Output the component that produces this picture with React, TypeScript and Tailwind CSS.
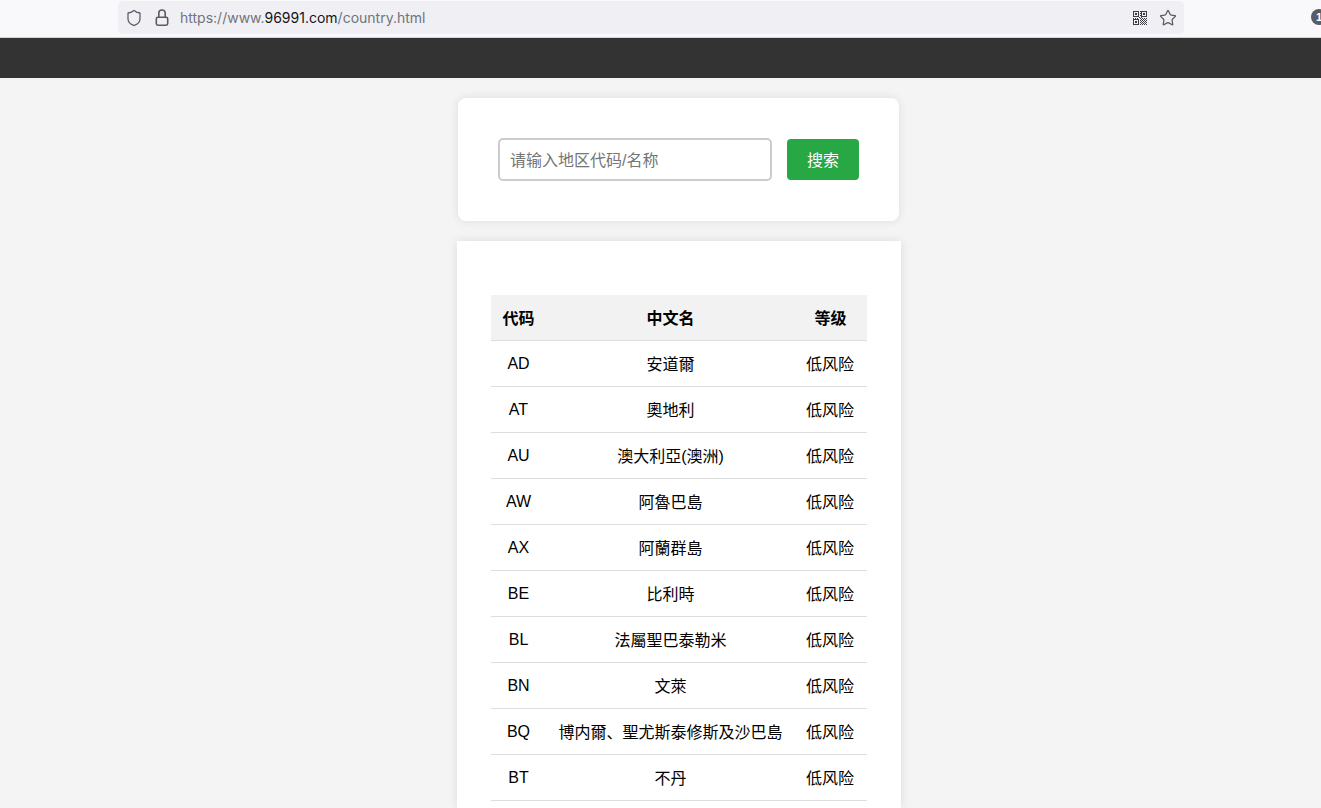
import React from 'react';
import { Shield, Star } from 'lucide-react';

const rows = [
  ['AD', '安道爾'],
  ['AT', '奧地利'],
  ['AU', '澳大利亞(澳洲)'],
  ['AW', '阿魯巴島'],
  ['AX', '阿蘭群島'],
  ['BE', '比利時'],
  ['BL', '法屬聖巴泰勒米'],
  ['BN', '文萊'],
  ['BQ', '博内爾、聖尤斯泰修斯及沙巴島'],
  ['BT', '不丹'],
];

// QR code button in the address bar
const QrIcon = () => (
  <svg width="14" height="14" viewBox="0 0 14 14" fill="#3c3c44" shapeRendering="crispEdges">
    <path d="M0 0h6v6H0zM1 1v4h4V1zM2 2h2v2H2zM8 0h6v6H8zM9 1v4h4V1zM10 2h2v2h-2zM0 8h6v6H0zM1 9v4h4V9zM2 10h2v2H2z" fillRule="evenodd" />
    <path d="M7 0h1v1H7zM7 2h1v1H7zM7 4h1v1H7zM0 7h1v1H0zM2 7h1v1H2zM4 7h1v1H4zM6 6h1v1H6zM7 7h1v1H7zM8 6h1v1H8zM9 7h1v1H9zM11 7h1v1h-1zM13 7h1v1h-1zM8 8h1v1H8zM10 8h1v1h-1zM12 8h1v1h-1zM7 9h1v1H7zM9 9h1v1H9zM11 9h1v1h-1zM13 9h1v1h-1zM8 10h1v1H8zM10 10h1v1h-1zM12 10h1v1h-1zM7 11h1v1H7zM9 11h1v1H9zM11 11h1v1h-1zM13 11h1v1h-1zM8 12h1v1H8zM10 12h1v1h-1zM12 12h1v1h-1zM7 13h1v1H7zM9 13h1v1H9zM11 13h1v1h-1zM13 13h1v1h-1z" />
  </svg>
);

// Narrow padlock, taller shackle than lucide's
const LockIcon = () => (
  <svg width="14" height="17" viewBox="0 0 14 17" fill="none" stroke="currentColor" strokeWidth="1.6" className="ml-[12px]">
    <rect x="1.3" y="8.3" width="11.4" height="7.9" rx="1.6" />
    <path d="M3.8 8.3V4.2a3.2 3.2 0 0 1 6.4 0v4.1" />
  </svg>
);

const App: React.FC = () => {
  return (
    <div className="flex flex-col h-screen overflow-hidden bg-[#f4f4f4] text-black font-['Liberation_Sans','Noto_Sans_CJK_SC',sans-serif]">
      {/* Browser toolbar */}
      <div className="flex h-[38px] shrink-0 items-start overflow-hidden border-b border-[#d4d4d6] bg-[#f9f9fb] pl-[118px] pt-px">
        <div className="flex h-[33px] w-[1066px] shrink-0 items-center rounded-[5px] bg-[#f0f0f4] pl-[7px] pr-[7px] text-[#5b5b66]">
          <Shield size={18} strokeWidth={1.7} />
          <LockIcon />
          <span className="ml-[11px] text-[14px] text-[#73737b] font-['Inter','Liberation_Sans',sans-serif]">
            https://www.<span className="text-[#15141a]">96991.com</span>/country.html
          </span>
          <div className="ml-auto flex items-center gap-[12px]">
            <QrIcon />
            <Star size={18} strokeWidth={1.7} />
          </div>
        </div>
        <div className="ml-[127px] mt-[8px] h-4 w-4 shrink-0 rounded-full bg-[#5b5b66] pl-[5px] text-[11px] font-bold leading-4 text-white">1</div>
      </div>

      {/* Dark top bar */}
      <div className="h-10 shrink-0 bg-[#333333]" />

      <div className="flex flex-1 flex-col items-center pt-5 pl-[36px]">
        {/* Search card */}
        <div className="flex h-[123px] w-[441px] shrink-0 items-center rounded-lg bg-white pl-10 shadow-[0_0_10px_rgba(0,0,0,0.1)]">
          <input
            placeholder="请输入地区代码/名称"
            className="h-[43px] w-[274px] rounded-[5px] border-2 border-[#cccccc] pl-[10px] pr-[11px] pt-[2px] text-base outline-none placeholder:text-[#757575]"
          />
          <button className="ml-[15px] h-[41px] w-[72px] rounded-[4px] bg-[#28a745] pt-[2px] text-base text-white">搜索</button>
        </div>

        {/* Country table card */}
        <div className="ml-px mt-5 w-[444px] flex-1 bg-white pl-[34px] pt-[54px] shadow-[0_0_10px_rgba(0,0,0,0.1)]">
          <table className="w-[376px] table-fixed border-collapse text-center text-base">
            <thead>
              <tr className="h-[45px] border-b border-[#dddddd] bg-[#f2f2f2]">
                <th className="w-[55px] pt-[4px] font-bold">代码</th>
                <th className="w-[249px] pt-[4px] font-bold">中文名</th>
                <th className="w-[72px] pt-[4px] pr-px font-bold">等级</th>
              </tr>
            </thead>
            <tbody>
              {rows.map(([code, name]) => (
                <tr key={code} className="h-[46px] border-b border-[#dddddd]">
                  <td className="pt-[2px]">{code}</td>
                  <td className="pt-[4px]">{name}</td>
                  <td className="pt-[4px] pr-[2px]">低风险</td>
                </tr>
              ))}
            </tbody>
          </table>
        </div>
      </div>
    </div>
  );
};

export default App;
